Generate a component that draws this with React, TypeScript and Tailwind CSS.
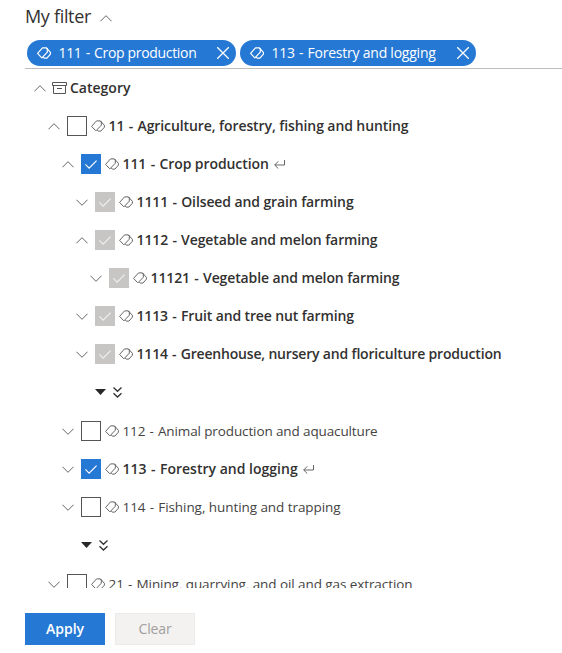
import type { ReactNode } from "react";

function Chevron({ up = false }: { up?: boolean }) {
  return (
    <svg className="h-[7px] w-3 shrink-0" viewBox="0 0 12 7" fill="none" stroke="#555" strokeWidth="0.9">
      <path d={up ? "M0.4 6.3 6 0.7 11.6 6.3" : "M0.4 0.7 6 6.3 11.6 0.7"} />
    </svg>
  );
}

function Tags({ className }: { className: string }) {
  return (
    <svg className={`h-3 w-3.5 shrink-0 ${className}`} viewBox="0 0 14 12" fill="none" stroke="currentColor" strokeLinejoin="round">
      <path d="M4.3 10.3 0.6 6.4 5.5 0.9H9.4L10.3 2V5.2L4.9 10.9Z" />
      <path d="M9.4 0.9 13.4 5.3V7.2L9.9 11.1H7.2L6.3 10.2" />
    </svg>
  );
}

function Archive() {
  return (
    <svg className="h-3 w-[15px] shrink-0" viewBox="0 0 15 12" fill="none" stroke="#555">
      <path d="M0.5 0.5H14.5V3.5H0.5ZM1.5 3.5V11.5H13.5V3.5M5 6.5H10" />
    </svg>
  );
}

function Enter() {
  return (
    <svg className="ml-[5px] h-[9px] w-[11px] shrink-0" viewBox="0 0 11 9" fill="none" stroke="#555" strokeWidth="0.9">
      <path d="M10.5 0V5H0.8M4.3 1.3 0.7 5 4.3 8.6" />
    </svg>
  );
}

function Label({ code, name }: { code: string; name: string }) {
  return (
    <>
      <span className="[word-spacing:0.8px]">{code} - </span>
      {name}
    </>
  );
}

function Chip({ code, name, className }: { code: string; name: string; className: string }) {
  return (
    <div className={`flex h-[26px] items-center rounded-full bg-[#2578d4] pr-[7px] pl-[9.5px] text-white ${className}`}>
      <Tags className="text-white [stroke-width:1.2]" />
      <span className="ml-2 flex-1 pb-px whitespace-nowrap">
        <Label code={code} name={name} />
      </span>
      <svg className="size-3 shrink-0" viewBox="0 0 12 12" fill="none" stroke="white" strokeWidth="1.3">
        <path d="M0 0 12 12M12 0 0 12" />
      </svg>
    </div>
  );
}

type State = "off" | "on" | "inherited";

const boxes: Record<State, string> = {
  off: "border border-[#555]",
  on: "bg-[#2578d4]",
  inherited: "bg-[#c8c6c4]",
};

function Row({ pad, up, state, bold, enter, track, code, name }: {
  pad: string; up?: boolean; state: State; bold?: boolean; enter?: boolean; track: string; code: string; name: string;
}) {
  return (
    <div className={`flex h-[38px] shrink-0 items-center ${pad}`}>
      <Chevron up={up} />
      <span className={`ml-[7px] flex size-5 shrink-0 items-center justify-center ${boxes[state]}`}>
        {state !== "off" && (
          <svg className="h-[9px] w-3" viewBox="0 0 12 9" fill="none" stroke={state === "on" ? "white" : "#f0efee"} strokeWidth="1.2">
            <path d="M0.4 4.4 4.1 8.1 11.6 0.6" />
          </svg>
        )}
      </span>
      <Tags className="ml-1 text-[#555] [stroke-width:0.9]" />
      <span className={`ml-[3.5px] whitespace-nowrap ${bold ? "pb-0.5 text-[14px] font-semibold text-[#323130]" : "text-[13.5px] text-[#444342]"} ${track}`}>
        <Label code={code} name={name} />
      </span>
      {enter && <Enter />}
    </div>
  );
}

function More({ pad }: { pad: string }) {
  return (
    <div className={`flex h-[39px] shrink-0 items-center gap-[7px] pb-px ${pad}`}>
      <svg className="h-1.5 w-[11px]" viewBox="0 0 11 6" fill="#292827">
        <path d="M0 0H11L5.5 6Z" />
      </svg>
      <svg className="h-[11px] w-[9px]" viewBox="0 0 9 11" fill="none" stroke="#323130" strokeWidth="1.3">
        <path d="M0.5 0.5 4.5 4.3 8.5 0.5M0.5 6.2 4.5 10 8.5 6.2" />
      </svg>
    </div>
  );
}

export default function App() {
  return (
    <div className="flex h-[653px] w-[562px] flex-col overflow-hidden bg-white pl-[25px] font-['Open_Sans',sans-serif] text-[#323130]">
      <div className="flex h-10 shrink-0 items-center gap-[9px] pb-[7px]">
        <h1 className="text-[18px] tracking-[-0.32px]">My filter</h1>
        <span className="mt-[3px] flex"><Chevron up /></span>
      </div>
      <div className="flex h-[29px] shrink-0 items-start gap-1 border-b border-[#bdbdbd] pl-0.5 text-[14px]">
        <Chip className="w-[209px] tracking-[-0.32px]" code="111" name="Crop production" />
        <Chip className="w-[236px] tracking-[-0.23px]" code="113" name="Forestry and logging" />
      </div>
      <div className="flex h-[519px] shrink-0 flex-col overflow-hidden">
        <div className="flex h-[38px] shrink-0 items-center pl-[9px]">
          <Chevron up />
          <span className="ml-1.5 flex"><Archive /></span>
          <span className="ml-[3px] pb-0.5 text-[14px] font-semibold">Category</span>
        </div>
        <Row pad="pl-[23px]" up state="off" bold track="tracking-[-0.088px]" code="11" name="Agriculture, forestry, fishing and hunting" />
        <Row pad="pl-[37px]" up state="on" bold enter track="tracking-[-0.08px]" code="111" name="Crop production" />
        <Row pad="pl-[51px]" state="inherited" bold track="tracking-[-0.105px]" code="1111" name="Oilseed and grain farming" />
        <Row pad="pl-[51px]" up state="inherited" bold track="tracking-[-0.115px]" code="1112" name="Vegetable and melon farming" />
        <Row pad="pl-[65px]" state="inherited" bold track="tracking-[-0.112px]" code="11121" name="Vegetable and melon farming" />
        <Row pad="pl-[51px]" state="inherited" bold track="tracking-[-0.13px]" code="1113" name="Fruit and tree nut farming" />
        <Row pad="pl-[51px]" state="inherited" bold track="tracking-[-0.179px]" code="1114" name="Greenhouse, nursery and floriculture production" />
        <More pad="pl-[70px]" />
        <Row pad="pl-[37px]" state="off" track="tracking-[-0.12px]" code="112" name="Animal production and aquaculture" />
        <Row pad="pl-[37px]" state="on" bold enter track="tracking-[0.01px]" code="113" name="Forestry and logging" />
        <Row pad="pl-[37px]" state="off" track="tracking-[-0.065px]" code="114" name="Fishing, hunting and trapping" />
        <More pad="pl-[56px]" />
        <Row pad="pl-[23px]" state="off" track="tracking-[-0.08px]" code="21" name="Mining, quarrying, and oil and gas extraction" />
      </div>
      <div className="mt-[25px] flex gap-2.5 text-[14px]">
        <button className="h-8 w-20 bg-[#2578d4] pb-px font-semibold text-white">Apply</button>
        <button className="h-8 w-20 border border-[#edebe9] bg-[#f3f2f1] pb-px tracking-[-0.14px] text-[#a19f9d]">Clear</button>
      </div>
    </div>
  );
}
